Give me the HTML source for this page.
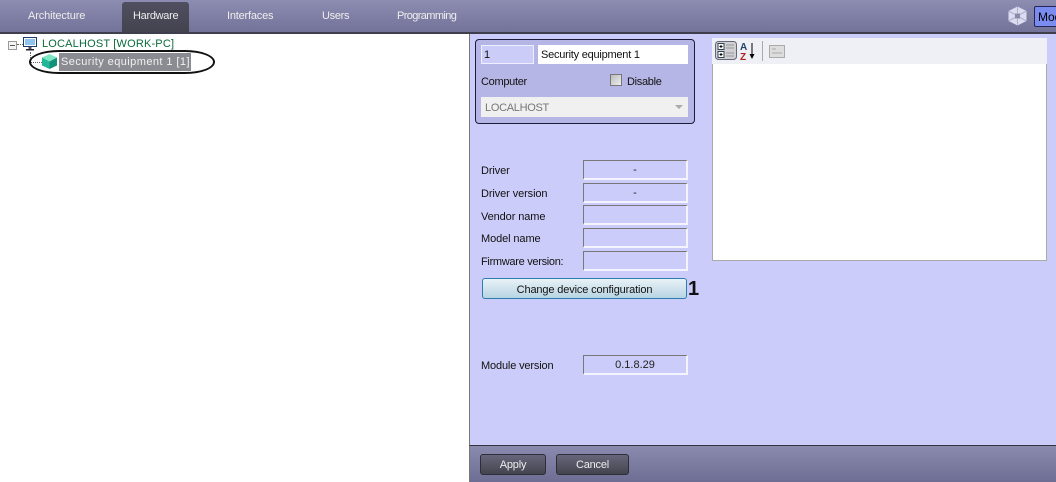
<!DOCTYPE html>
<html><head><meta charset="utf-8"><style>
html,body{margin:0;padding:0}
body{width:1056px;height:482px;position:relative;overflow:hidden;background:#fff;font-family:"Liberation Sans",sans-serif;font-size:11px;color:#111}
.a{position:absolute}
.t{position:absolute;white-space:nowrap;line-height:16px;letter-spacing:-.2px}
.tab{color:#eee;top:8px}
.box{position:absolute;width:102px;height:17px;background:#ccccfa;border:1px solid;border-color:#777 #f4f4ff #f4f4ff #777;border-width:1px 2px 2px 1px;text-align:center;line-height:18px;font-size:11px;color:#222}
.btn{position:absolute;top:454px;height:19px;background:linear-gradient(#66667a,#44444f);border:1px solid #2e2e38;border-radius:3px;color:#eee;text-align:center;line-height:21px;letter-spacing:-.2px}
</style></head><body>
<div class="a" style="left:0;top:0;width:1056px;height:32px;background:linear-gradient(#8d8db2,#73739a)"></div>
<div class="a" style="left:0;top:32px;width:1056px;height:2px;background:#3e3e4c"></div>
<div class="a" style="left:122px;top:2px;width:67px;height:30px;background:linear-gradient(#4f4f60,#43434f);border-radius:3px 3px 0 0"></div>
<div class="t tab" style="left:28px;letter-spacing:-.12px">Architecture</div>
<div class="t tab" style="left:133px;letter-spacing:-.3px">Hardware</div>
<div class="t tab" style="left:227px;letter-spacing:-.2px">Interfaces</div>
<div class="t tab" style="left:322px;letter-spacing:-.3px">Users</div>
<div class="t tab" style="left:397px;letter-spacing:-.62px">Programming</div>
<svg class="a" style="left:1007px;top:6px" width="21" height="20" viewBox="0 0 21 20"><polygon points="10.500,0.500 19.500,5 19.500,15 10.500,19.500 1.500,15 1.500,5" fill="#dcdcf0"/><path d="M1.500 5L8 8.500M19.500 5L13 8.500M1.500 15L8 11.500M19.500 15L13 11.500M10.500 .5V7M10.500 19.500V13" stroke="#b0b0d0" stroke-width="1"/><rect x="8" y="7.500" width="5" height="5" fill="#8a8aa8"/></svg>
<div class="a" style="left:1034px;top:6px;width:30px;height:19px;background:#7a8cf0;border:1px solid #25255a;border-radius:2px;font-size:12px;line-height:20px;padding-left:3px;color:#000">Mod</div>

<!-- tree -->
<div class="a" style="left:8px;top:41px;width:7px;height:7px;border:1px solid #999;background:#f4f4f4"></div>
<div class="a" style="left:10px;top:45px;width:5px;height:1px;background:#555"></div>
<div class="a" style="left:17px;top:44px;width:6px;border-top:1px dotted #666"></div>
<svg class="a" style="left:23px;top:37px" width="15" height="14" viewBox="0 0 15 14"><rect x=".5" y=".5" width="13" height="9" fill="#fff" stroke="#1d3a6a"/><rect x="2" y="2" width="10" height="6" fill="#8fc4ee"/><rect x="5.500" y="10" width="3" height="2" fill="#556"/><rect x="3" y="12" width="8" height="1.500" fill="#223"/></svg>
<div class="t" style="left:42px;top:36px;color:#0c6a3c;letter-spacing:.18px">LOCALHOST [WORK-PC]</div>
<div class="a" style="left:30px;top:52px;height:10px;border-left:1px dotted #666"></div>
<div class="a" style="left:30px;top:62px;width:12px;border-top:1px dotted #666"></div>
<svg class="a" style="left:41px;top:53px" width="17" height="17" viewBox="0 0 17 17"><polygon points="8.500,1 16,4.500 8.500,8.500 1,4.500" fill="#7fe6c4"/><polygon points="1,4.500 8.500,8.500 8.500,16 1,12.500" fill="#22b896"/><polygon points="16,4.500 8.500,8.500 8.500,16 16,12.500" fill="#12907a"/></svg>
<div class="a" style="left:59px;top:53px;width:132px;height:18px;background:#8b8b92"></div>
<div class="t" style="left:61px;top:54px;color:#f2f2f2;letter-spacing:.43px">Security equipment 1 [1]</div>
<div class="a" style="left:29px;top:50px;width:186px;height:24px;border:2px solid #111;border-radius:30px / 12px;box-sizing:border-box"></div>

<!-- right panel -->
<div class="a" style="left:469px;top:34px;width:587px;height:411px;background:#ccccfa;border-left:1px solid #777;box-sizing:border-box"></div>
<div class="a" style="left:475px;top:39px;width:218px;height:83px;background:#b6b6e6;border:1px solid #1c1c3a;border-radius:4px"></div>
<div class="a" style="left:481px;top:45px;width:51px;height:17px;background:#ccccf8;border:1px solid #eeeeff"></div>
<div class="t" style="left:484px;top:47px">1</div>
<div class="a" style="left:538px;top:45px;width:150px;height:19px;background:#fff"></div>
<div class="t" style="left:541px;top:47px;letter-spacing:-.23px">Security equipment 1</div>
<div class="t" style="left:481px;top:74px;letter-spacing:-.3px">Computer</div>
<div class="a" style="left:610px;top:74px;width:10px;height:10px;background:linear-gradient(135deg,#bbb,#eee);border:1px solid #777"></div>
<div class="t" style="left:627px;top:74px;letter-spacing:-.3px">Disable</div>
<div class="a" style="left:481px;top:97px;width:207px;height:20px;background:#f0f0f0"></div>
<div class="t" style="left:485px;top:100px;color:#777;letter-spacing:-.3px">LOCALHOST</div>
<div class="a" style="left:675px;top:105px;border:4px solid transparent;border-top:4px solid #aaa"></div>

<div class="a" style="left:712px;top:38px;width:335px;height:223px;border:1px solid #aaa;box-sizing:border-box;background:#fff"></div>
<div class="a" style="left:712px;top:38px;width:335px;height:26px;background:#efeff6"></div>
<svg class="a" style="left:714px;top:40px" width="75" height="22" viewBox="0 0 75 22"><rect x="1.500" y="1.500" width="21" height="18" rx="3" fill="#d0d0d4" stroke="#667"/><rect x="4" y="3.500" width="6" height="6" fill="#fff" stroke="#345"/><rect x="4" y="11.500" width="6" height="6" fill="#fff" stroke="#345"/><path d="M5.500 6.500H8.500M7 5V8M5.500 14.500H8.500M7 13V16" stroke="#000"/><path d="M12 5H20M12 8H20M12 13H20M12 16H20" stroke="#999"/><text x="26" y="10" font-size="10" font-weight="bold" fill="#246" font-family="Liberation Sans">A</text><text x="26" y="20" font-size="10" font-weight="bold" fill="#a22" font-family="Liberation Sans">Z</text><path d="M38 3V17" stroke="#000"/><path d="M35.500 14L38 19L40.500 14Z" fill="#000"/><path d="M48.500 1V21" stroke="#aaa"/><rect x="55.500" y="5.500" width="15" height="12" fill="#ddd" stroke="#aaa"/><path d="M58 9H62M58 13H68" stroke="#aaa"/></svg>

<div class="t" style="left:481px;top:163px;letter-spacing:-.1px">Driver</div>
<div class="box" style="left:583px;top:160px">-</div>
<div class="t" style="left:481px;top:186px;letter-spacing:-.1px">Driver version</div>
<div class="box" style="left:583px;top:183px">-</div>
<div class="t" style="left:481px;top:209px;letter-spacing:-.1px">Vendor name</div>
<div class="box" style="left:583px;top:205px"></div>
<div class="t" style="left:481px;top:231px;letter-spacing:-.1px">Model name</div>
<div class="box" style="left:583px;top:228px"></div>
<div class="t" style="left:481px;top:254px;letter-spacing:-.3px">Firmware version:</div>
<div class="box" style="left:583px;top:251px"></div>
<div class="a" style="left:482px;top:278px;width:203px;height:19px;background:linear-gradient(#e8f2f6,#b8d4e4);border:1px solid #2a7fb0;border-radius:3px;text-align:center;line-height:22px;letter-spacing:-.14px">Change device configuration</div>
<div class="a" style="left:688px;top:278px;font-size:20px;font-weight:bold;line-height:22px;color:#111">1</div>
<div class="t" style="left:481px;top:358px;letter-spacing:-.15px">Module version</div>
<div class="box" style="left:583px;top:355px">0.1.8.29</div>

<div class="a" style="left:469px;top:445px;width:587px;height:37px;background:linear-gradient(#8a8aae,#6e6e94);border-top:1px solid #33333f;box-sizing:border-box;border-left:1px solid #777"></div>
<div class="btn" style="left:480px;width:64px">Apply</div>
<div class="btn" style="left:556px;width:71px">Cancel</div>
</body></html>
